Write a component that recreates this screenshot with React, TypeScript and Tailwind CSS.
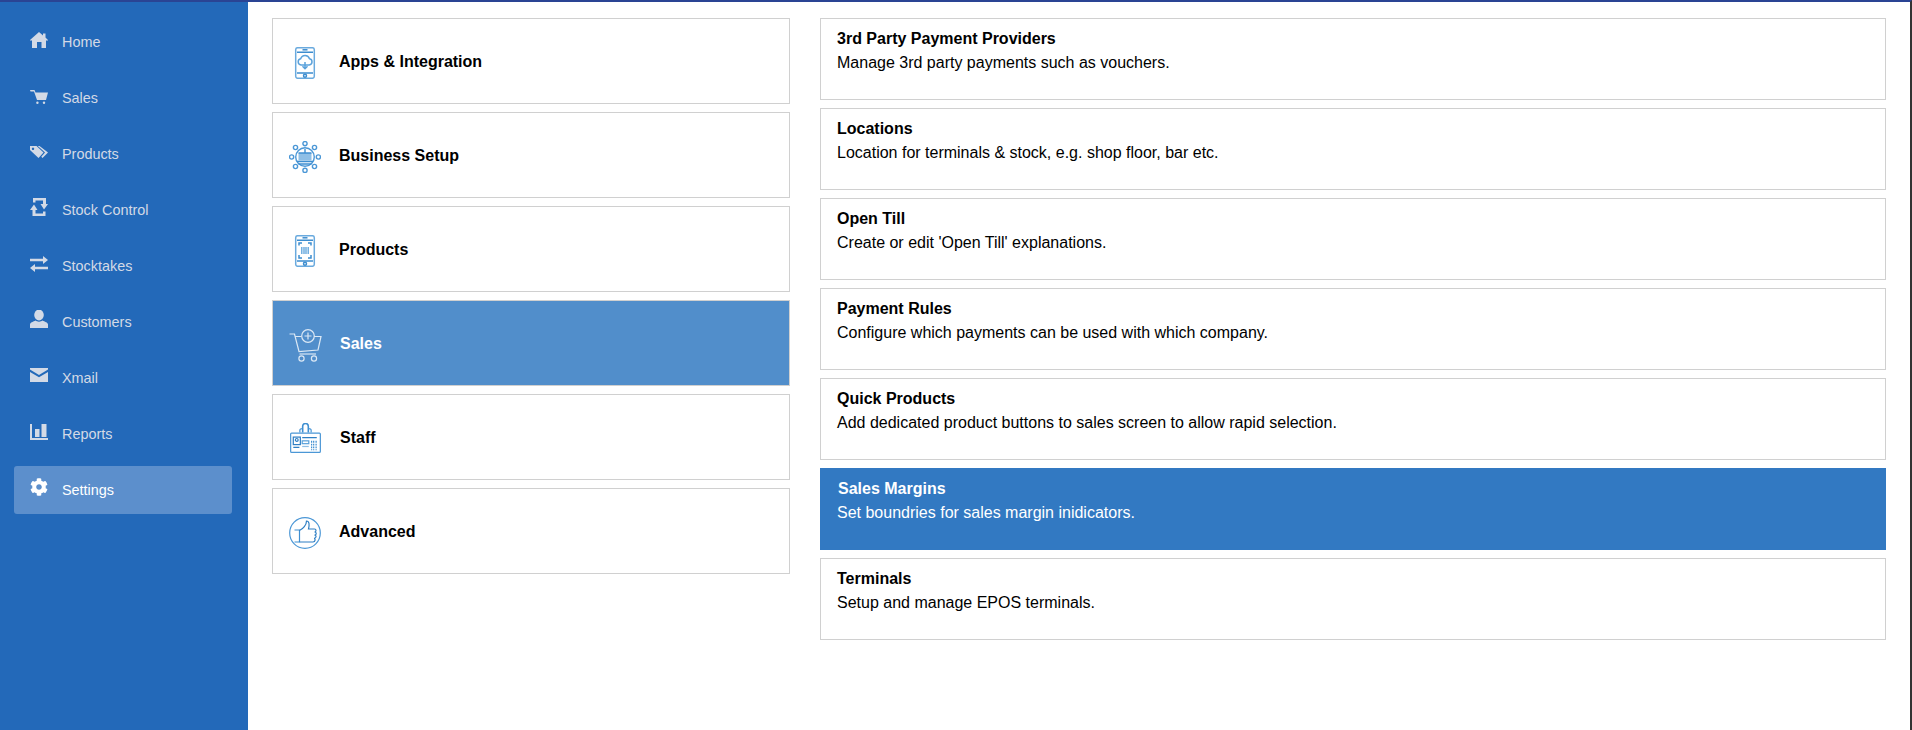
import { FaCog } from "react-icons/fa"

const HomeIcon = () => (
    <svg viewBox="0 0 18 18" className="w-[18px] h-[18px] mb-[6px] fill-current">
        <path d="M9 2 L13 5.4 V3.5 H15.5 V7.6 L18 10 V10.6 H16 V18 H11.5 V12 H7 V18 H2 V10.6 H0 V10 Z" />
    </svg>
)

const CartIcon = () => (
    <svg viewBox="0 0 18 18" className="w-[18px] h-[18px] mb-[6px] fill-current">
        <path d="M0 4 H4.5 L5.5 6.5 H18 L16 14 H7 L4 5.6 H0.5 Z" />
        <circle cx="7.4" cy="16.8" r="1.2" />
        <circle cx="14" cy="16.8" r="1.2" />
    </svg>
)

const TagsIcon = () => (
    <svg viewBox="0 0 18 18" className="w-[18px] h-[18px] mb-[6px] fill-current">
        <path fillRule="evenodd" d="M0 4 H6.5 L13.5 10.5 L8.5 16 L0 8 Z M3 5.6 a1.2 1.2 0 1 0 0.01 0 Z" />
        <path d="M9.5 4 L18 10.5 L12.5 16 L11.3 14.8 L15 10.5 L7.8 4 Z" />
    </svg>
)

const StockIcon = () => (
    <svg viewBox="0 0 18 18" className="w-[18px] h-[18px] mb-[6px] fill-current">
        <path d="M3 0 H16 V6 H18 L14 11.5 L10.5 6 H13 V2.5 H5.5 V4.5 H3 Z" />
        <path d="M0 12 L4 6.5 L7.5 12 H5.5 V15.5 H13 V13.5 H15.5 V18 H2.5 V12 Z" />
    </svg>
)

const TransferIcon = () => (
    <svg viewBox="0 0 18 18" className="w-[18px] h-[18px] mb-[6px] fill-current">
        <path d="M0 4.8 H13 V2 L18 6 L13 10 V7.2 H0 Z" />
        <path d="M18 12.8 H5 V10 L0 14 L5 18 V15.2 H18 Z" />
    </svg>
)

const UserIcon = () => (
    <svg viewBox="0 0 18 18" className="w-[18px] h-[18px] mb-[6px] fill-current">
        <ellipse cx="9" cy="5" rx="4.8" ry="5.4" />
        <path d="M0 18 V14.5 C0 12.5 3.5 11.5 5.5 10.5 C7 12 11 12 12.5 10.5 C14.5 11.5 18 12.5 18 14.5 V18 Z" />
    </svg>
)

const MailIcon = () => (
    <svg viewBox="0 0 18 18" className="w-[18px] h-[18px] mb-[6px] fill-current">
        <path d="M0 2 H18 V3.5 L9 9 L0 3.5 Z" />
        <path d="M0 6 L9 11.2 L18 6 V16 H0 Z" />
    </svg>
)

const StatsIcon = () => (
    <svg viewBox="0 0 18 18" className="w-[18px] h-[18px] mb-[6px] fill-current">
        <path d="M0 2 H2 V16 H18 V18 H0 Z" />
        <rect x="5" y="7" width="4.5" height="8" />
        <rect x="11.5" y="2" width="5" height="13" />
    </svg>
)

const CogIcon = () => <FaCog className="w-[18px] h-[18px] mb-[6px]" />

const AppsArt = () => (
    <svg viewBox="0 0 32 32" className="w-8 h-8 mt-1 shrink-0" fill="none" stroke="#6aaade" strokeWidth="1.5">
        <rect x="6.7" y="0.7" width="18.6" height="30.6" rx="2" />
        <path d="M8 5.2 H24 M8 26 H24" stroke="#3d8dcf" />
        <path d="M13.5 2.8 H18.5" stroke="#3d8dcf" />
        <circle cx="16" cy="28.7" r="1.5" stroke="#3d8dcf" />
        <path d="M12 18 a3.2 3.2 0 0 1 -0.3 -6.3 a4.6 4.6 0 0 1 8.8 0 a3.2 3.2 0 0 1 -0.3 6.3 Z" stroke="#5ba2db" />
        <path d="M16 15 V21.5 M13.5 19.2 L16 21.7 L18.5 19.2" stroke="#5ba2db" />
    </svg>
)

const BusinessArt = () => (
    <svg viewBox="0 0 32 32" className="w-8 h-8 mt-1 shrink-0" fill="none" stroke="#4b97d6" strokeWidth="1.4">
        <circle cx="16" cy="16" r="9.3" />
        <circle cx="16" cy="2.6" r="2.1" />
        <circle cx="16" cy="29.4" r="2.1" />
        <circle cx="2.6" cy="16" r="2.1" />
        <circle cx="29.4" cy="16" r="2.1" />
        <circle cx="6.5" cy="6.5" r="2.1" />
        <circle cx="25.5" cy="6.5" r="2.1" />
        <circle cx="6.5" cy="25.5" r="2.1" />
        <circle cx="25.5" cy="25.5" r="2.1" />
        <rect x="9.5" y="12" width="13" height="7.5" fill="#8fbfe6" stroke="none" />
        <path d="M9.5 12 H22.5 M16 8 V12 M8 20.5 H24 M9.5 23 H22.5" stroke="#3f8fd1" />
    </svg>
)

const ProductsArt = () => (
    <svg viewBox="0 0 32 32" className="w-8 h-8 mt-1 shrink-0" fill="none" stroke="#6aaade" strokeWidth="1.5">
        <rect x="6.7" y="0.7" width="18.6" height="30.6" rx="2" />
        <path d="M8 5.2 H24 M8 26 H24" stroke="#3d8dcf" />
        <path d="M13.5 2.8 H18.5" stroke="#3d8dcf" />
        <circle cx="16" cy="28.7" r="1.5" stroke="#3d8dcf" />
        <path d="M10 10.5 V8 H13 M19 8 H22 V10.5 M10 20 V23 H13 M19 23 H22 V20" stroke="#3d8dcf" />
        <path d="M12.8 12 V19 M15 12 V19 M17 12 V19 M19.2 12 V19" stroke="#5ba2db" strokeWidth="1.3" />
    </svg>
)

const SalesArt = () => (
    <svg viewBox="0 0 33 33" className="w-[33px] h-[33px] mt-1 shrink-0" fill="none" stroke="#dbe8f5" strokeWidth="1.2">
        <path d="M0.5 5 H5.5 L10 22.5 L29 21 L32 7.5 H25 M6.5 7.5 H12.5" />
        <path d="M10.5 25 H27" />
        <circle cx="19" cy="7" r="6.3" />
        <path d="M15.5 7 H22.5 M19 3.5 V10.5" />
        <circle cx="12.5" cy="29.5" r="2.6" />
        <circle cx="25" cy="29.5" r="2.6" />
    </svg>
)

const StaffArt = () => (
    <svg viewBox="0 0 33 33" className="w-[33px] h-[31px] mt-[3px] shrink-0" fill="none" stroke="#4b97d6" strokeWidth="1.3">
        <rect x="0.7" y="10.7" width="31.6" height="20.6" rx="1" />
        <path d="M13.5 10 V3.5 C13.5 -0.5 19.5 -0.5 19.5 3.5 V10" stroke="#3f8fd1" strokeWidth="1.7" />
        <path d="M10.5 10 V7.5 C10.5 6.5 11.5 6 13 6 M22.5 10 V7.5 C22.5 6.5 21.5 6 20 6" />
        <rect x="3.5" y="15" width="7.5" height="8" stroke="#2f7fc4" />
        <circle cx="7.2" cy="18" r="1.5" stroke="#2f7fc4" />
        <path d="M3.5 26 H10 M13 15.5 H28.5" stroke="#2f7fc4" />
        <rect x="13" y="19" width="7" height="3" stroke="#5ba2db" />
        <path d="M23 19 V29 M25.2 19 V29 M27.8 19 V29" stroke="#3f8fd1" strokeDasharray="2 1" />
        <path d="M13 25 H20" stroke="#8fbfe6" />
    </svg>
)

const AdvancedArt = () => (
    <svg viewBox="0 0 32 32" className="w-8 h-8 mt-1 shrink-0" fill="none" stroke="#4b97d6" strokeWidth="1.2">
        <circle cx="16" cy="16" r="15.3" />
        <path d="M5.5 13 H10.5 V25 H5.5" stroke="#3f8fd1" />
        <path d="M10.5 13.5 C14 12 17.5 8 17.5 4 C20.5 4 20.5 8 19.5 12 H25.5 C27.5 12 27.5 15 25.5 15 C27.8 15 27.8 18.2 25.5 18.2 C27.6 18.2 27.6 21.4 25 21.4 C26.6 21.4 26.6 25 24 25 H10.5" stroke="#2f7fc4" />
    </svg>
)

const navItems = [
    { label: "Home", icon: HomeIcon },
    { label: "Sales", icon: CartIcon },
    { label: "Products", icon: TagsIcon },
    { label: "Stock Control", icon: StockIcon },
    { label: "Stocktakes", icon: TransferIcon },
    { label: "Customers", icon: UserIcon },
    { label: "Xmail", icon: MailIcon },
    { label: "Reports", icon: StatsIcon },
    { label: "Settings", icon: CogIcon, active: true },
]

const categories = [
    { label: "Apps & Integration", art: AppsArt },
    { label: "Business Setup", art: BusinessArt },
    { label: "Products", art: ProductsArt },
    { label: "Sales", art: SalesArt, active: true },
    { label: "Staff", art: StaffArt },
    { label: "Advanced", art: AdvancedArt },
]

const options = [
    { title: "3rd Party Payment Providers", text: "Manage 3rd party payments such as vouchers." },
    { title: "Locations", text: "Location for terminals & stock, e.g. shop floor, bar etc." },
    { title: "Open Till", text: "Create or edit 'Open Till' explanations." },
    { title: "Payment Rules", text: "Configure which payments can be used with which company." },
    { title: "Quick Products", text: "Add dedicated product buttons to sales screen to allow rapid selection." },
    { title: "Sales Margins", text: "Set boundries for sales margin inidicators.", active: true },
    { title: "Terminals", text: "Setup and manage EPOS terminals." },
]

const App = () => {
    return (
        <div className="flex h-screen overflow-hidden border-t-2 border-t-[#2a4494] border-r-2 border-r-[#333333] bg-white font-['Liberation_Sans',Arial,sans-serif] text-base text-black">
            {/* sidebar */}
            <nav className="w-[248px] shrink-0 bg-[#2369b9] pt-4 pl-[14px] pr-4 flex flex-col gap-2 text-[14.4px]">
                {navItems.map((item) => {
                    const Icon = item.icon
                    return (
                        <a
                            key={item.label}
                            className={`flex items-center gap-[14px] h-12 pl-4 rounded-[3px] ${item.active ? "bg-[#5c8fcc] text-white" : "text-[#d3dae6]"}`}
                        >
                            <Icon />
                            <span className="mt-0.5">{item.label}</span>
                        </a>
                    )
                })}
            </nav>

            <main className="flex-1 flex gap-[30px] pt-4 pl-6 pr-6">
                {/* categories */}
                <div className="w-[518px] shrink-0 flex flex-col gap-2">
                    {categories.map((cat) => {
                        const Art = cat.art
                        return (
                            <div
                                key={cat.label}
                                className={`h-[86px] flex items-center gap-[18px] pl-4 border border-[#d0d0d0] ${cat.active ? "bg-[#518ecb] text-white" : "bg-white"}`}
                            >
                                <Art />
                                <span className="font-bold mt-0.5">{cat.label}</span>
                            </div>
                        )
                    })}
                </div>

                {/* options */}
                <div className="flex-1 flex flex-col gap-2">
                    {options.map((opt) => (
                        <div
                            key={opt.title}
                            className={`h-[82px] pt-2 pl-4 border leading-6 ${opt.active ? "bg-[#3279c2] border-[#3279c2] text-white" : "bg-white border-[#d0d0d0]"}`}
                        >
                            <div className={`font-bold ${opt.active ? "pl-px" : ""}`}>{opt.title}</div>
                            <div>{opt.text}</div>
                        </div>
                    ))}
                </div>
            </main>
        </div>
    )
}

export default App
